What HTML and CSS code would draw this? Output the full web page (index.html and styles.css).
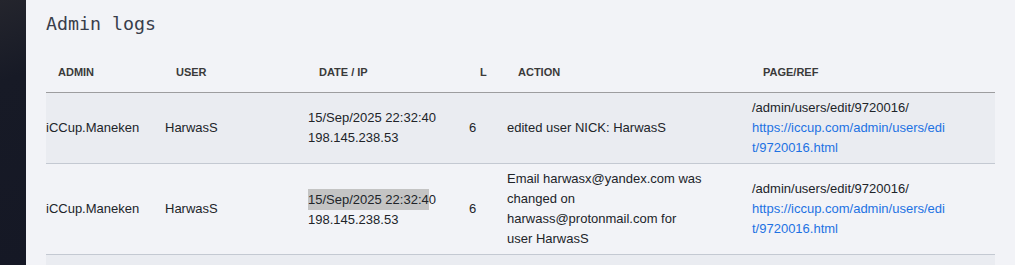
FILE: index.html
```html
<!DOCTYPE html>
<html lang="en">
<head>
    <meta charset="UTF-8">
    <meta name="viewport" content="width=device-width, initial-scale=1.0">
    <title>Admin logs</title>
    <link rel="stylesheet" href="styles.css">
</head>
<body>
    <div class="sidebar"></div>

    <div class="content">
        <h1 class="page-title">Admin logs</h1>

        <table class="logs">
            <colgroup>
                <col class="col-admin">
                <col class="col-user">
                <col class="col-date">
                <col class="col-level">
                <col class="col-action">
                <col class="col-page">
            </colgroup>
            <thead>
                <tr>
                    <th>Admin</th>
                    <th>User</th>
                    <th>Date / IP</th>
                    <th>L</th>
                    <th>Action</th>
                    <th>Page/Ref</th>
                </tr>
            </thead>
            <tbody>
                <tr>
                    <td>iCCup.Maneken</td>
                    <td>HarwasS</td>
                    <td>15/Sep/2025 22:32:40<br>198.145.238.53</td>
                    <td>6</td>
                    <td class="action">edited user NICK: HarwasS</td>
                    <td class="page">/admin/users/edit/9720016/<br><a href="#">https://iccup.com/admin/users/edit/9720016.html</a></td>
                </tr>
                <tr>
                    <td>iCCup.Maneken</td>
                    <td>HarwasS</td>
                    <td><span class="selected">15/Sep/2025 22:32:4</span>0<br>198.145.238.53</td>
                    <td>6</td>
                    <td class="action">Email harwasx@yandex.com was changed on harwass@protonmail.com for user HarwasS</td>
                    <td class="page">/admin/users/edit/9720016/<br><a href="#">https://iccup.com/admin/users/edit/9720016.html</a></td>
                </tr>
                <tr>
                    <td>iCCup.Maneken</td>
                    <td>HarwasS</td>
                    <td>15/Sep/2025 22:30:12<br>198.145.238.53</td>
                    <td>6</td>
                    <td class="action">edited user NICK: HarwasS</td>
                    <td class="page">/admin/users/edit/11045880/<br><a href="#">https://iccup.com/admin/users/edit/11045880.html</a></td>
                </tr>
            </tbody>
        </table>
    </div>
</body>
</html>
```

FILE: styles.css
```css
body {
    margin: 0;
    display: flex;
    height: 100vh;
    overflow: hidden;
    font-family: "Liberation Sans", Arial, sans-serif;
    background-color: #f2f3f7;
}
.sidebar {
    width: 26px;
    flex-shrink: 0;
    background: linear-gradient(160deg, #24252d 0%, #171a26 30%, #151825 100%);
}
.content {
    flex: 1;
    padding: 10px 20px 0;
}
.page-title {
    margin: 0 0 14px;
    font-family: "DejaVu Sans Mono", monospace;
    font-size: 18.3px;
    font-weight: normal;
    line-height: 28px;
    color: #393e4b;
}
.logs {
    width: 949px;
    table-layout: fixed;
    border-collapse: collapse;
    font-size: 13px;
    color: #212429;
}
.col-admin { width: 119px; }
.col-user { width: 143px; }
.col-date { width: 161px; }
.col-level { width: 38px; }
.col-action { width: 245px; }
.col-page { width: 243px; }
.logs th {
    height: 40px;
    padding: 0 0 0 11px;
    text-align: left;
    text-transform: uppercase;
    font-size: 11px;
    font-weight: bold;
    color: #3a3a3a;
    border-bottom: 1px solid #9d9d9f;
}
.logs th:first-child {
    padding-left: 12px;
}
.logs td {
    padding: 5px 0;
    line-height: 20px;
    vertical-align: middle;
    border-bottom: 1px solid #c4c9d2;
}
.logs td.action {
    padding-right: 49px;
}
.logs td.page {
    padding-right: 45px;
    word-break: break-all;
}
.logs tbody tr:nth-child(odd) {
    background-color: #eaecf1;
}
.logs a {
    color: #1d72e3;
    text-decoration: none;
}
.selected {
    display: inline-block;
    line-height: 21px;
    background-color: #c4c4c4;
}
```
